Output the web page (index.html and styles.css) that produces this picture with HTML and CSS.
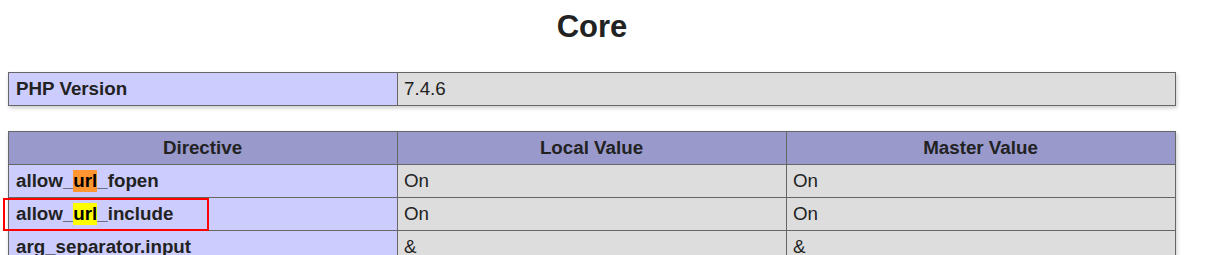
FILE: index.html
```html
<!DOCTYPE html>
<html>
<head>
<meta charset="utf-8">
<title>Core</title>
<link rel="stylesheet" href="styles.css">
</head>
<body>
<div class="center">
  <h2 class="title">Core</h2>
  <table class="info">
    <colgroup><col class="c-e"><col></colgroup>
    <tr><td class="e">PHP Version</td><td class="v">7.4.6</td></tr>
  </table>
  <table class="info directives">
    <colgroup><col class="c-e"><col class="c-v"><col></colgroup>
    <tr class="h"><th>Directive</th><th>Local Value</th><th>Master Value</th></tr>
    <tr><td class="e">allow_<span class="hit active">url</span>_fopen</td><td class="v">On</td><td class="v">On</td></tr>
    <tr><td class="e">allow_<span class="hit">url</span>_include</td><td class="v">On</td><td class="v">On</td></tr>
    <tr><td class="e">arg_separator.input</td><td class="v">&amp;</td><td class="v">&amp;</td></tr>
  </table>
  <div class="annot"></div>
</div>
</body>
</html>
```
FILE: styles.css
```css
html, body {
  margin: 0;
  padding: 0;
  background: #fff;
}
body {
  padding: 8px;
  color: #222;
  font-family: "Liberation Sans", Arial, sans-serif;
}
.center {
  width: 1168px;
  position: relative;
}
.title {
  margin: 0 0 28px;
  padding-top: 2px;
  font-size: 31px;
  line-height: 34px;
  text-align: center;
  font-weight: bold;
}
.info {
  border-collapse: collapse;
  table-layout: fixed;
  width: 1168px;
  box-shadow: 1px 2px 4px #ccc;
  margin-bottom: 25px;
}
.c-e { width: 389px; }
.c-v { width: 389px; }
.info td, .info th {
  border: 1px solid #666;
  font-size: 18.75px;
  line-height: 22px;
  padding: 5px 7px 5px 6px;
  vertical-align: baseline;
  text-align: left;
}
.info td.e {
  padding-left: 7px;
}
.info th {
  text-align: center;
  background: #99c;
  font-weight: bold;
}
.e {
  background: #ccf;
  font-weight: bold;
}
.v {
  background: #ddd;
}
.hit {
  display: inline-block;
  background: #ffff00;
  color: #000;
}
.hit.active {
  background: #ff9632;
}
.annot {
  position: absolute;
  left: -5px;
  top: 190px;
  width: 202px;
  height: 29px;
  border: 2px solid #f00;
}
```
